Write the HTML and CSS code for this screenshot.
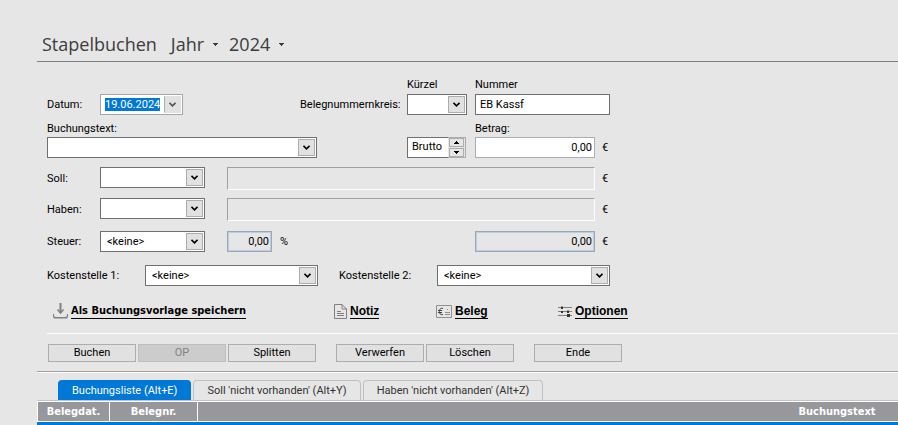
FILE: index.html
```html
<!DOCTYPE html>
<html lang="de">
<head>
<meta charset="utf-8">
<title>Stapelbuchen</title>
<link rel="stylesheet" href="styles.css">
</head>
<body>
<svg class="sprite" aria-hidden="true">
  <symbol id="chevron" viewBox="0 0 7 5"><path d="M0.5 0.8 3.5 3.8 6.5 0.8" fill="none" stroke="currentColor" stroke-width="1.6"/></symbol>
  <symbol id="triangle" viewBox="0 0 5 3"><path d="M0 0h5v1H4v1H3v1H2V2H1V1H0z" fill="currentColor"/></symbol>
</svg>
<header class="title">
  <h1>Stapelbuchen</h1>
  <button type="button" class="period">Jahr <svg class="tri"><use href="#triangle"/></svg></button>
  <button type="button" class="period">2024 <svg class="tri"><use href="#triangle"/></svg></button>
</header>
<main>
<form class="form">
  <div class="row captions">
    <label class="c-kuerzel" for="kuerzel">Kürzel</label>
    <label class="c-betrag" for="nummer">Nummer</label>
  </div>
  <div class="row">
    <label for="datum">Datum:</label>
    <div class="combo date">
      <input id="datum" type="text" value="19.06.2024">
      <span class="arrow"><svg><use href="#chevron"/></svg></span>
    </div>
    <label class="c-kreis" for="kuerzel">Belegnummernkreis:</label>
    <div class="combo kuerzel"><select id="kuerzel"><option></option></select><span class="arrow"><svg><use href="#chevron"/></svg></span></div>
    <input class="field nummer" id="nummer" type="text" value="EB Kassf">
  </div>
  <div class="row captions second">
    <label class="c-wide" for="text">Buchungstext:</label>
    <label class="c-betrag" for="betrag">Betrag:</label>
  </div>
  <div class="row">
    <div class="combo text"><select id="text"><option></option></select><span class="arrow"><svg><use href="#chevron"/></svg></span></div>
    <div class="spin c-kuerzel">
      <input type="text" value="Brutto" aria-label="Brutto oder Netto">
      <div class="steps">
        <button type="button" aria-label="Hoch"><svg class="up"><use href="#triangle"/></svg></button>
        <button type="button" aria-label="Runter"><svg><use href="#triangle"/></svg></button>
      </div>
    </div>
    <input class="field soft amount" id="betrag" type="text" value="0,00">
    <span class="unit">€</span>
  </div>
  <div class="row account">
    <label for="soll">Soll:</label>
    <div class="combo"><select id="soll"><option></option></select><span class="arrow"><svg><use href="#chevron"/></svg></span></div>
    <output class="display" for="soll"></output>
    <span class="unit">€</span>
  </div>
  <div class="row account">
    <label for="haben">Haben:</label>
    <div class="combo"><select id="haben"><option></option></select><span class="arrow"><svg><use href="#chevron"/></svg></span></div>
    <output class="display" for="haben"></output>
    <span class="unit">€</span>
  </div>
  <div class="row tax">
    <label for="steuer">Steuer:</label>
    <div class="combo"><select id="steuer"><option>&lt;keine&gt;</option></select><span class="arrow"><svg><use href="#chevron"/></svg></span></div>
    <div class="rate"><input class="field calc" type="text" value="0,00" readonly aria-label="Steuersatz"><span>%</span></div>
    <input class="field calc amount" type="text" value="0,00" readonly aria-label="Steuerbetrag">
    <span class="unit">€</span>
  </div>
  <div class="centers">
    <label for="ks1">Kostenstelle 1:</label>
    <div class="combo"><select id="ks1"><option>&lt;keine&gt;</option></select><span class="arrow"><svg><use href="#chevron"/></svg></span></div>
    <label for="ks2">Kostenstelle 2:</label>
    <div class="combo"><select id="ks2"><option>&lt;keine&gt;</option></select><span class="arrow"><svg><use href="#chevron"/></svg></span></div>
  </div>
  <nav class="links">
    <a class="save" href="#vorlage"><svg width="15" height="16" viewBox="0 0 15 16" fill="none" stroke="#808080"><path d="M7.500 0v10" stroke-width="2"/><path d="M4.500 6.500l3 3.500 3-3.500" stroke-width="1.500"/><path d="M.5 11v3h1v1h12v-1h1v-3M1.500 14.500h12" stroke-width="1.200"/></svg><span>Als Buchungsvorlage speichern</span></a>
    <a href="#notiz"><svg width="13" height="15" viewBox="0 0 13 15" fill="none" stroke="#808080"><path d="M.5.5h7.500l4.500 4.500v9.500H.5zM8 .5V5h4.500M3 7.500h4M3 9.500h7M3 11.500h7"/></svg><span>Notiz</span></a>
    <a href="#beleg"><svg width="16" height="13" viewBox="0 0 16 13" fill="none" stroke="#909090"><path d="M.5.5h15v12H.5z"/><path d="M7 3.500C4 2.500 3.500 5 3.500 6.500S4 10.500 7 9.500M2 5.500h4M2 7.500h4" stroke="#444"/><path d="M11 4.500h1M9 7.500h5M9 9.500h5"/></svg><span>Beleg</span></a>
    <a class="options" href="#optionen"><svg width="14" height="13" viewBox="0 0 14 13" fill="none" stroke="#808080"><path d="M0 2.500h14M0 6.500h14M0 10.500h14"/><path d="M3 1h2v3H3zM9 5h2v3H9zM9 9h3v3H9zM3 6h2v2H3z" fill="#333" stroke="none"/><path d="M3 1h2v1H3zM9 5h2v1H9z" fill="#9a9a20" stroke="none"/></svg><span>Optionen</span></a>
  </nav>
</form>
<div class="actions">
  <button type="button">Buchen</button>
  <button type="button" disabled>OP</button>
  <button type="button">Splitten</button>
  <button type="button" class="apart">Verwerfen</button>
  <button type="button">Löschen</button>
  <button type="button" class="apart">Ende</button>
</div>
<section class="list">
  <div class="tabs" role="tablist">
    <button type="button" role="tab" aria-selected="true">Buchungsliste (Alt+E)</button>
    <button type="button" role="tab" aria-selected="false">Soll 'nicht vorhanden' (Alt+Y)</button>
    <button type="button" role="tab" aria-selected="false">Haben 'nicht vorhanden' (Alt+Z)</button>
  </div>
  <div class="scroller">
  <table>
    <thead><tr><th class="col-date">Belegdat.</th><th class="col-no">Belegnr.</th><th>Buchungstext</th></tr></thead>
    <tbody><tr><td></td><td></td><td></td></tr></tbody>
  </table>
  </div>
</section>
</main>
<script>
  const datum = document.getElementById('datum');
  datum.focus();
  datum.select();
</script>
</body>
</html>
```
FILE: styles.css
```css
* { box-sizing: border-box; }
body {
  margin: 0;
  padding-left: 37px;
  background: #e6e6e6;
  color: #000;
  font: 11px/14px "Tahoma", "Roboto", sans-serif;
  overflow: hidden;
}
button, input, select { font: inherit; color: inherit; margin: 0; border-radius: 0; outline: none; }
.sprite { position: absolute; width: 0; height: 0; }

.title {
  display: flex;
  align-items: center;
  gap: 14px;
  padding: 29px 0 1px 5px;
  border-bottom: 1px solid #808080;
  color: #3c3c3c;
  font: 18px/31px "Segoe UI", "Open Sans", sans-serif;
}
.title h1 { margin: 0; font: inherit; }
.period { display: flex; align-items: center; gap: 9px; padding: 0; border: 0; background: none; }
.period + .period { margin-left: -3px; }
.tri { width: 5px; height: 3px; }

.form { padding: 16px 0 14px 10px; }
.row {
  display: grid;
  grid-template-columns: 53px 127px 73px 107px 68px 120px 1fr;
  align-items: center;
  height: 21px;
}
.row > * { grid-row: 1; }
.captions { height: 14px; margin-bottom: 2px; }
.captions.second { margin: 7px 0 1px; }
.c-kreis { grid-column: 4; }
.c-kuerzel { grid-column: 5; }
.c-betrag { grid-column: 6; }
.c-wide { grid-column: 1 / 4; }
label { white-space: nowrap; }

.combo { display: grid; width: 105px; height: 21px; border: 1px solid #707070; background: #fff; }
.combo > * { grid-area: 1 / 1; min-width: 0; }
.combo select, .combo input {
  appearance: none;
  width: 100%;
  height: 19px;
  padding: 0 20px 0 6px;
  border: 0;
  background: transparent;
}
.combo .arrow {
  justify-self: end;
  display: grid;
  place-items: center;
  width: 17px;
  margin: 1px;
  border: 1px solid #adadad;
  background: #e1e1e1;
  pointer-events: none;
}
.arrow svg { width: 7px; height: 5px; }
.date { width: 83px; border-color: #a5a5ad; }
.date .arrow { border-color: #e1e1e1; border-left-color: #adadad; color: #505050; }
.combo.date input { padding: 0 0 1px 4px; }
.date input::selection { background: #0078d7; color: #fff; }
.kuerzel { grid-column: 5; width: 60px; }
.text { grid-column: 1 / 5; width: 270px; }

.field { height: 21px; border: 1px solid #707070; padding: 0 4px 1px; background: #fff; }
.nummer { grid-column: 6 / 8; width: 135px; }
.soft { border-color: #adadb5; }
.amount { grid-column: 6; width: 120px; padding-right: 2px; text-align: right; }
.calc { border-color: #a5a5ad; background: #e6e6e6; box-shadow: inset 0 0 0 1px #b3cfee; }
.unit { grid-column: 7; padding-left: 7px; }

.spin { display: flex; width: 59px; height: 21px; border: 1px solid #adadad; background: #e6e6e6; }
.spin input { width: 41px; margin: -1px 0 -1px -1px; padding: 0 0 1px 4px; border: 1px solid #707070; border-right: 0; background: #fff; }
.steps { flex: 1; display: grid; gap: 1px; padding: 0 1px; }
.steps button { display: grid; place-items: center; padding: 0; border: 1px solid #adadad; background: #e6e6e6; }
.steps svg { width: 5px; height: 3px; }
.steps .up { transform: rotate(180deg); }

.account { height: 22px; margin-top: 9px; }
.account .combo { align-self: start; }
.display { grid-column: 3 / 7; height: 23px; border: 1px solid; border-color: #a0a0a0 #fff #fff #a0a0a0; }
.tax { margin-top: 11px; }
.rate { grid-column: 3; display: flex; align-items: center; gap: 8px; }
.rate .field { width: 45px; padding-right: 2px; text-align: right; }

.centers { display: grid; grid-template-columns: 98px 194px 98px 173px; align-items: center; margin-top: 13px; }
.centers .combo { width: 173px; }

.links { display: grid; grid-template-columns: 281px 102px 122px auto; justify-content: start; margin: 17px 0 0 6px; }
.links a { display: flex; align-items: center; gap: 3px; height: 16px; color: #000; font: bold 12px/14px "Liberation Sans", sans-serif; text-decoration: none; }
.links .save { font: bold 11px/14px "Tahoma", "DejaVu Sans Condensed", sans-serif; }
.links span { border-bottom: 1px solid #000; white-space: nowrap; }

.actions {
  display: flex;
  gap: 2px;
  margin-left: 10px;
  padding: 10px 0 9px 1px;
  border-top: 1px solid #fff;
}
.actions button { width: 88px; height: 18px; padding: 0; border: 1px solid #adadad; background: #e1e1e1; }
.actions button:disabled { border-color: #bfbfbf; background: #ccc; color: #838383; }
.actions .apart { margin-left: 18px; }

.list { border-top: 1px solid #a0a0a0; box-shadow: inset 0 1px #fff; padding-top: 8px; }
.tabs { display: flex; gap: 2px; padding-left: 21px; border-bottom: 1px solid #c4c4c8; }
.tabs button { height: 20px; padding: 0 13px; border: 1px solid #c0c0c0; border-bottom: 0; border-radius: 4px 4px 0 0; background: #e6e6e6; color: #333; white-space: nowrap; }
.tabs [aria-selected="true"] { border-color: #0078d7; background: #0078d7; color: #fff; }
.scroller { overflow: hidden; }
table { width: calc(100% + 578px); table-layout: fixed; border-collapse: separate; border-spacing: 0; }
th { height: 21px; padding: 0; border: solid #fff; border-width: 1px 0 1px 1px; background: #97979c; color: #fff; font: bold 11px/14px "Tahoma", "DejaVu Sans Condensed", sans-serif; }
.col-date { width: 72px; }
.col-no { width: 88px; }
td { height: 19px; padding: 0; background: #0078d7; }
```
